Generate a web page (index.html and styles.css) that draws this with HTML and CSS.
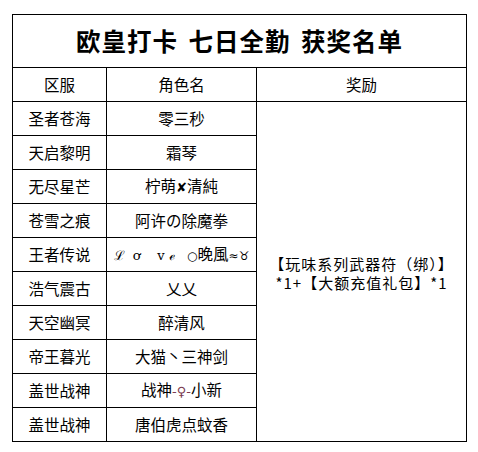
FILE: index.html
```html
<!DOCTYPE html>
<html lang="zh-CN">
<head>
<meta charset="utf-8">
<title>欧皇打卡 七日全勤 获奖名单</title>
<link rel="stylesheet" href="styles.css">
</head>
<body>
<table class="award">
  <colgroup>
    <col class="c-server">
    <col class="c-name">
    <col class="c-prize">
  </colgroup>
  <tr class="title-row"><td colspan="3" class="title">欧皇打卡 七日全勤 获奖名单</td></tr>
  <tr class="head-row"><td>区服</td><td>角色名</td><td>奖励</td></tr>
  <tr><td>圣者苍海</td><td>零三秒</td><td rowspan="10" class="prize">【玩味系列武器符（绑）】<br>*1+【大额充值礼包】*1</td></tr>
  <tr><td>天启黎明</td><td>霜琴</td></tr>
  <tr><td>无尽星芒</td><td>柠萌<span class="cross">✘</span>清純</td></tr>
  <tr><td>苍雪之痕</td><td>阿许の除魔拳</td></tr>
  <tr><td>王者传说</td><td><span class="deco">ℒ&nbsp;&nbsp;ơ&nbsp;&nbsp;&nbsp;&nbsp;ᴠ&nbsp;ℯ&nbsp;&nbsp;&nbsp;</span><span class="ring">○</span>晚風<span class="deco-s">≈♉</span></td></tr>
  <tr><td>浩气震古</td><td>乂乂</td></tr>
  <tr><td>天空幽冥</td><td>醉清风</td></tr>
  <tr><td>帝王暮光</td><td>大猫丶三神剑</td></tr>
  <tr><td>盖世战神</td><td>战神<span class="pin">-♀-</span>小新</td></tr>
  <tr><td>盖世战神</td><td>唐伯虎点蚊香</td></tr>
</table>
</body>
</html>
```
FILE: styles.css
```css
html, body {
  margin: 0;
  padding: 0;
  background: #fff;
}
body {
  padding: 14px 0 0 12px;
  font-family: "Noto Sans CJK SC", "Noto Sans", sans-serif;
  color: #000;
}
.award {
  border-collapse: collapse;
  table-layout: fixed;
  width: 454px;
}
.c-server { width: 94px; }
.c-name { width: 150px; }
.c-prize { width: 210px; }
.award td {
  border: 1px solid #000;
  text-align: center;
  vertical-align: middle;
  font-size: 15.5px;
  line-height: 19px;
  height: 33px;
  padding: 0;
  white-space: nowrap;
}
.award .title {
  height: 52px;
  font-size: 24.5px;
  font-weight: bold;
  line-height: 30px;
  letter-spacing: 1px;
  word-spacing: 4px;
}
.award .prize {
  font-size: 15px;
  line-height: 19px;
  padding-top: 2px;
  letter-spacing: 1px;
}
.cross {
  font-family: "DejaVu Sans", sans-serif;
  font-weight: bold;
  font-size: 13px;
}
.deco {
  font-family: "DejaVu Serif", serif;
  font-size: 13px;
}
.ring {
  font-family: "DejaVu Sans", sans-serif;
  font-size: 12px;
}
.deco-s {
  font-family: "DejaVu Sans", sans-serif;
  font-size: 12px;
}
.pin {
  font-family: "DejaVu Sans", sans-serif;
  font-size: 13px;
  color: #7a3a50;
}
```
